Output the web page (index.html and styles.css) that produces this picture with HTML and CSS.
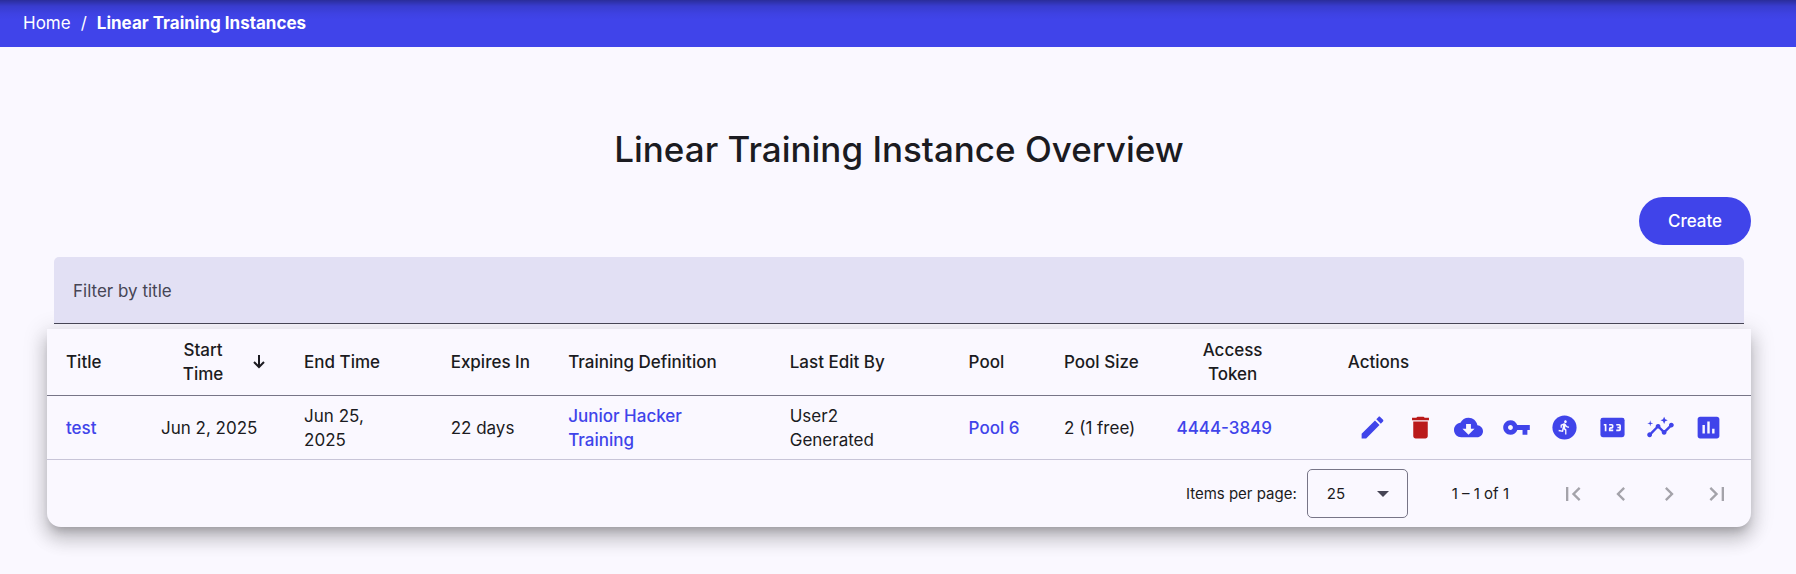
FILE: index.html
```html
<!DOCTYPE html>
<html lang="en">
<head>
<meta charset="utf-8">
<meta name="viewport" content="width=device-width, initial-scale=1">
<title>Linear Training Instances</title>
<link rel="stylesheet" href="styles.css">
</head>
<body>
<nav class="breadcrumb" aria-label="Breadcrumb">
  <a href="#">Home</a>
  <span>/</span>
  <a class="current" href="#" aria-current="page">Linear Training Instances</a>
</nav>
<main class="page">
  <h1 class="heading">Linear Training Instance Overview</h1>
  <div class="toolbar"><button class="create" type="button">Create</button></div>
  <div class="filter">
    <div class="field"><input type="text" aria-label="Filter by title" placeholder="Filter by title"></div>
  </div>
  <section class="card">
    <table class="instances">
      <colgroup>
        <col class="c-title"><col class="c-start"><col class="c-end"><col class="c-expires"><col class="c-definition">
        <col class="c-editor"><col class="c-pool"><col class="c-size"><col class="c-token"><col class="c-actions">
      </colgroup>
      <thead>
        <tr>
          <th><button class="sort" type="button">Title</button></th>
          <th>
            <button class="sort wrapped" type="button">
              <span>Start Time</span>
              <svg class="arrow" viewBox="0 0 12 14" aria-hidden="true"><path d="M6 0v12M1 7l5 5 5-5" fill="none" stroke="currentColor" stroke-width="2"/></svg>
            </button>
          </th>
          <th><button class="sort" type="button">End Time</button></th>
          <th>Expires In</th>
          <th>Training Definition</th>
          <th>Last Edit By</th>
          <th>Pool</th>
          <th>Pool Size</th>
          <th>
            <button class="sort wrapped" type="button">
              <span>Access Token</span>
              <svg class="arrow idle" viewBox="0 0 12 14" aria-hidden="true"><path d="M6 0v12M1 7l5 5 5-5" fill="none" stroke="currentColor" stroke-width="2"/></svg>
            </button>
          </th>
          <th>Actions</th>
        </tr>
      </thead>
      <tbody>
        <tr>
          <td><a href="#">test</a></td>
          <td class="single">Jun 2, 2025</td>
          <td class="narrow">Jun 25, 2025</td>
          <td>22 days</td>
          <td class="narrow"><a href="#">Junior Hacker Training</a></td>
          <td class="narrow">User2 Generated</td>
          <td class="single"><a href="#">Pool 6</a></td>
          <td class="single">2 (1 free)</td>
          <td><a href="#">4444-3849</a></td>
          <td>
            <div class="actions">
              <button type="button" aria-label="Edit"><svg viewBox="0 0 24 24"><path d="M3 17.25V21h3.75L17.81 9.94l-3.75-3.75L3 17.25zM20.71 7.04c.39-.39.39-1.02 0-1.41l-2.34-2.34c-.39-.39-1.02-.39-1.41 0l-1.83 1.83 3.75 3.75 1.83-1.83z"/></svg></button>
              <button class="danger" type="button" aria-label="Delete"><svg viewBox="0 0 24 24"><path d="M6 19c0 1.1.9 2 2 2h8c1.1 0 2-.9 2-2V7H6v12zM19 4h-3.500l-1-1h-5l-1 1H5v2h14V4z"/></svg></button>
              <button type="button" aria-label="Download data"><svg viewBox="0 0 24 24"><path d="M19.350 10.040C18.670 6.590 15.640 4 12 4 9.110 4 6.600 5.640 5.350 8.040 2.340 8.360 0 10.910 0 14c0 3.310 2.690 6 6 6h13c2.760 0 5-2.240 5-5 0-2.640-2.050-4.780-4.650-4.960zM17 13l-5 5-5-5h3V9h4v4h3z"/></svg></button>
              <button type="button" aria-label="Access token"><svg viewBox="0 0 24 24"><path d="M12.650 10C11.830 7.670 9.610 6 7 6c-3.310 0-6 2.690-6 6s2.690 6 6 6c2.610 0 4.830-1.670 5.650-4H17v4h4v-4h2v-4H12.650zM7 14c-1.100 0-2-.9-2-2s.9-2 2-2 2 .9 2 2-.9 2-2 2z"/></svg></button>
              <button type="button" aria-label="Training runs"><svg viewBox="0 0 24 24"><circle cx="12" cy="12" r="10"/><path class="cut" transform="translate(5.500 5.300) scale(.54)" d="M13.490 5.480c1.100 0 2-.9 2-2s-.9-2-2-2-2 .9-2 2 .9 2 2 2zm-3.600 13.900l1-4.400 2.100 2v6h2v-7.500l-2.100-2 .6-3c1.300 1.500 3.300 2.500 5.500 2.500v-2c-1.900 0-3.500-1-4.300-2.400l-1-1.600c-.4-.6-1-1-1.700-1-.3 0-.5.1-.8.1l-5.200 2.200v4.700h2v-3.400l1.800-.7-1.600 8.100-4.900-1-.4 2 7 1.400z"/></svg></button>
              <button type="button" aria-label="Tokens"><svg viewBox="0 0 24 24"><rect x="2" y="4" width="20" height="16" rx="2"/><path class="cut-line" d="M4.800 9.700h1.500v5.300M9.200 9.700h2.200q.7 0 .7.700v1.200q0 .7-.7.700h-1q-.7 0-.7.700v1.300h2.900M15.100 9.700h2.500q.7 0 .7.700v3.200q0 .7-.7.700h-2.500M16 12h2.300"/></svg></button>
              <button type="button" aria-label="Progress"><svg viewBox="0 0 24 24"><path d="M21 8c-1.450 0-2.260 1.440-1.930 2.510l-3.550 3.560c-.3-.09-.74-.09-1.040 0l-2.550-2.550C12.270 10.450 11.460 9 10 9c-1.450 0-2.270 1.440-1.930 2.520l-4.560 4.550C2.440 15.740 1 16.550 1 18c0 1.100.9 2 2 2 1.450 0 2.260-1.440 1.930-2.510l4.550-4.560c.3.09.74.09 1.040 0l2.550 2.550C12.730 16.550 13.540 18 15 18c1.450 0 2.270-1.440 1.930-2.520l3.560-3.550C21.560 12.260 23 11.450 23 10c0-1.100-.9-2-2-2z"/><path d="M15 9l.94-2.070L18 6l-2.060-.93L15 3l-.92 2.070L12 6l2.080.93zM3.500 11L4 9l2-.5L4 8l-.5-2L3 8l-2 .5L3 9z"/></svg></button>
              <button type="button" aria-label="Results"><svg viewBox="0 0 24 24"><path d="M19 3H5c-1.100 0-2 .9-2 2v14c0 1.100.9 2 2 2h14c1.100 0 2-.9 2-2V5c0-1.100-.9-2-2-2zM9 17H7v-7h2v7zm4 0h-2V7h2v10zm4 0h-2v-4h2v4z"/></svg></button>
            </div>
          </td>
        </tr>
      </tbody>
    </table>
    <footer class="paginator">
      <label for="page-size">Items per page:</label>
      <div class="size">
        <select id="page-size"><option>10</option><option selected>25</option><option>50</option></select>
        <svg viewBox="0 0 10 5" aria-hidden="true"><path d="M0 0h10L5 5z"/></svg>
      </div>
      <span class="range">1 – 1 of 1</span>
      <div class="pages">
        <button type="button" aria-label="First page" disabled><svg viewBox="0 0 24 24"><path d="M18.410 16.590L13.820 12l4.590-4.590L17 6l-6 6 6 6zM6 6h2v12H6z"/></svg></button>
        <button type="button" aria-label="Previous page" disabled><svg viewBox="0 0 24 24"><path d="M15.410 7.410L14 6l-6 6 6 6 1.410-1.410L10.830 12z"/></svg></button>
        <button type="button" aria-label="Next page" disabled><svg viewBox="0 0 24 24"><path d="M10 6L8.590 7.410 13.170 12l-4.580 4.590L10 18l6-6z"/></svg></button>
        <button type="button" aria-label="Last page" disabled><svg viewBox="0 0 24 24"><path d="M5.590 7.410L10.180 12l-4.590 4.590L7 18l6-6-6-6zM16 6h2v12h-2z"/></svg></button>
      </div>
    </footer>
  </section>
</main>
</body>
</html>
```

FILE: styles.css
```css
:root {
  --primary: #4044ea;
  --surface: #faf8ff;
  --text: #1b1b21;
  --muted: #464555;
  --outline: #777587;
}

* {
  box-sizing: border-box;
}

body {
  margin: 0;
  background: var(--surface);
  color: var(--text);
  font-family: Inter, sans-serif;
  font-size: 17px;
  line-height: 24px;
}

button {
  border: 0;
  padding: 0;
  background: none;
  color: inherit;
  font: inherit;
}

a {
  color: var(--primary);
  font-weight: 500;
  text-decoration: none;
}

svg {
  display: block;
  fill: currentColor;
}

.breadcrumb {
  display: flex;
  gap: 10px;
  padding: 11px 23px 12px;
  background: linear-gradient(rgba(0, 0, 0, 0.34), rgba(0, 0, 0, 0.12) 6px, rgba(0, 0, 0, 0.03) 14px, transparent 20px) var(--primary);
  color: #fff;
}

.breadcrumb a {
  color: inherit;
  font-weight: 400;
}

.breadcrumb .current {
  font-weight: 700;
}

.page {
  padding: 78px 45px 47px 47px;
}

.heading {
  margin: 0 0 24px;
  font-size: 35px;
  font-weight: 500;
  line-height: 48px;
  text-align: center;
}

.toolbar {
  display: flex;
  justify-content: flex-end;
}

.create {
  width: 112px;
  height: 48px;
  border-radius: 24px;
  background: var(--primary);
  color: #fff;
  font-weight: 500;
}

.filter {
  padding: 12px 7px 5px;
}

.field {
  position: relative;
  z-index: 1;
  border-bottom: 1px solid var(--muted);
}

.field input {
  display: block;
  width: 100%;
  height: 66px;
  padding: 2px 19px 0;
  border: 0;
  border-radius: 5px 5px 0 0;
  background: #e2e0f4;
  color: var(--text);
  font: inherit;
}

.field input::placeholder {
  color: var(--muted);
  opacity: 1;
}

.card {
  border-radius: 0 0 14px 14px;
  background: var(--surface);
  box-shadow: 0 7px 8px -4px rgba(0, 0, 0, 0.2), 0 12px 17px 2px rgba(0, 0, 0, 0.14), 0 5px 22px 4px rgba(0, 0, 0, 0.12);
}

.instances {
  width: 100%;
  border-collapse: separate;
  border-spacing: 0;
  table-layout: fixed;
}

.c-title { width: 5.75%; }
.c-start { width: 8.4%; }
.c-end { width: 8.6%; }
.c-expires { width: 6.9%; }
.c-definition { width: 13%; }
.c-editor { width: 10.5%; }
.c-pool { width: 5.6%; }
.c-size { width: 6.6%; }
.c-token { width: 10.05%; }
.c-actions { width: 24.6%; }

.instances th,
.instances td {
  padding: 0 19px 0 16px;
  text-align: left;
}

.instances th:first-child,
.instances td:first-child {
  padding-left: 19px;
}

.instances th {
  height: 67px;
  border-bottom: 1px solid var(--outline);
  font-weight: 500;
  white-space: nowrap;
}

.instances td {
  height: 64px;
  border-bottom: 1px solid #c8c5d8;
}

.instances td.narrow {
  padding-right: 48px;
}

.instances td.single {
  padding-right: 0;
  white-space: nowrap;
}

.sort {
  display: flex;
  align-items: center;
  width: 100%;
}

.sort.wrapped span {
  flex: 1;
  padding: 0 16px;
  text-align: center;
  white-space: normal;
}

.arrow {
  flex: none;
  width: 12px;
  height: 14px;
  margin: 0 4px 0 8px;
}

.arrow.idle {
  visibility: hidden;
}

.actions {
  display: flex;
  justify-content: flex-end;
}

.actions button,
.pages button {
  display: grid;
  place-items: center;
  width: 48px;
  height: 48px;
  color: var(--primary);
}

.actions .danger {
  color: #ba1a1a;
}

.actions svg {
  width: 29px;
  height: 29px;
}

.cut {
  fill: var(--surface);
}

.cut-line {
  fill: none;
  stroke: var(--surface);
  stroke-width: 1.4;
}

.paginator {
  display: flex;
  align-items: center;
  justify-content: flex-end;
  min-height: 67px;
  padding: 0 10px;
  font-size: 15px;
}

.size {
  position: relative;
  margin: 0 44px 0 10px;
}

.size select {
  display: block;
  width: 101px;
  height: 49px;
  padding: 0 19px;
  border: 1px solid var(--outline);
  border-radius: 5px;
  background: none;
  color: var(--text);
  font: inherit;
  appearance: none;
}

.size svg {
  position: absolute;
  top: 22px;
  right: 19px;
  width: 12px;
  height: 6px;
  color: var(--muted);
  pointer-events: none;
}

.range {
  margin-right: 40px;
}

.pages {
  display: flex;
}

.pages button {
  color: #a4a3aa;
}

.pages svg {
  width: 28px;
  height: 28px;
}
```
